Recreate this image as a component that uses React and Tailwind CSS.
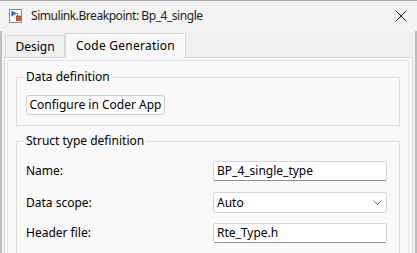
import React from "react";

function WinIcon() {
  return (
    <svg width="13" height="14" viewBox="0 0 13 14" className="block">
      <rect x="0.5" y="0.5" width="12" height="13" fill="#fbfbfb" stroke="#8a8a8a" />
      <path d="M3 2.5 L3 7.5 M3 2.5 L7.5 4.5 L3 6.5 Z" fill="#2a7fd4" stroke="#1f5fa8" strokeWidth="0.8" />
      <path d="M5 4.5 H8.5 V7" fill="none" stroke="#3a8ad8" strokeWidth="0.8" />
      <rect x="7.5" y="7" width="4" height="4.5" fill="#e2561f" stroke="#8a2a0a" strokeWidth="0.7" />
    </svg>
  );
}

function Input({ value }) {
  return (
    <div className="w-[174px] h-[20px] bg-white border border-[#d6d6d6] border-b-[#8f8f8f] rounded-[2px] flex items-center pl-[3px] text-[12px] text-black">
      {value}
    </div>
  );
}

function Select({ value }) {
  return (
    <div className="w-[174px] h-[21px] bg-white border border-[#d6d6d6] rounded-[2px] flex items-center justify-between pl-[3px] pr-[4px] text-[12px] text-black">
      <span>{value}</span>
      <svg width="9" height="5" viewBox="0 0 9 5" className="block">
        <path d="M0.5 0.5 L4.5 4.5 L8.5 0.5" fill="none" stroke="#6a6a6a" strokeWidth="1" />
      </svg>
    </div>
  );
}

function Row({ label, children, className = "" }) {
  return (
    <div className={"flex items-center " + className}>
      <div className="w-[187px] text-[12px] text-black">{label}</div>
      {children}
    </div>
  );
}

export default function App() {
  return (
    <div
      className="w-[417px] h-[253px] overflow-hidden flex flex-col bg-[#f0f0f0] border-t border-[#a8a8a8]"
      style={{ fontFamily: '"Noto Sans", "Liberation Sans", sans-serif' }}
    >
      {/* Title bar */}
      <div className="h-[30px] shrink-0 bg-[#f3f3f3] flex items-center pl-[9px] pr-[10px]">
        <WinIcon />
        <div className="ml-[9px] text-[12px] tracking-[-0.45px] text-[#1b1b1b] leading-none">Simulink.Breakpoint: Bp_4_single</div>
        <div className="ml-auto">
          <svg width="12" height="12" viewBox="0 0 12 12" className="block">
            <path d="M0.5 0.5 L11.5 11.5 M11.5 0.5 L0.5 11.5" stroke="#1b1b1b" strokeWidth="1" />
          </svg>
        </div>
      </div>
      {/* Body */}
      <div className="flex-1 flex flex-col border-l-2 border-r-2 border-[#bdbdbd] pl-[2px] pr-[2px] pt-[1px]">
        {/* Tabs */}
        <div className="flex items-end h-[25px] relative z-10">
          <div className="ml-[1px] h-[22px] w-[60px] border border-b-0 border-[#d9d9d9] bg-[#f0f0f0] flex items-center justify-center text-[12px] text-black">
            Design
          </div>
          <div className="h-[25px] w-[121px] border border-b-0 border-[#d9d9d9] bg-[#f9f9f9] flex items-center justify-center text-[12px] tracking-[0.25px] text-black mb-[-1px] pb-[1px]">
            Code Generation
          </div>
        </div>
        {/* Tab panel */}
        <div className="flex-1 border border-[#d9d9d9] bg-[#f9f9f9] p-[2px] pr-[3px]">
          <div className="h-full border border-[#e3e3e3] bg-[#f9f9f9] px-[8px] pt-[8px]">
            <fieldset className="border border-[#dcdcdc] pl-[9px] pb-[10px] pt-[10px]">
              <legend className="ml-[-2px] px-[2px] text-[12px] leading-[16px] text-black">Data definition</legend>
              <div className="w-[139px] h-[20px] bg-[#fdfdfd] border border-[#d0d0d0] rounded-[3px] flex items-center justify-center text-[12px] text-black">
                Configure in Coder App
              </div>
            </fieldset>
            <fieldset className="mt-[7px] border border-[#dcdcdc] pl-[9px] pr-[12px] pt-[12px] pb-[10px] flex flex-col">
              <legend className="ml-[-2px] px-[2px] text-[12px] leading-[16px] text-black">Struct type definition</legend>
              <Row label="Name:"><Input value="BP_4_single_type" /></Row>
              <Row label="Data scope:" className="mt-[11px]"><Select value="Auto" /></Row>
              <Row label="Header file:" className="mt-[10px]"><Input value="Rte_Type.h" /></Row>
            </fieldset>
          </div>
        </div>
      </div>
    </div>
  );
}
